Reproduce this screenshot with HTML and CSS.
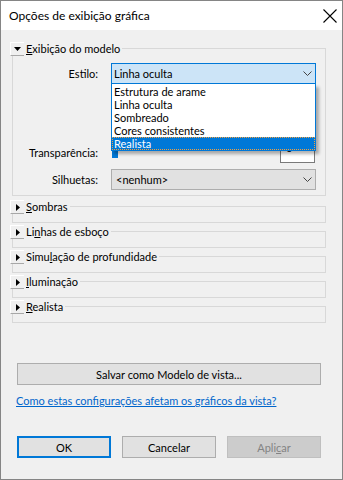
FILE: index.html
```html
<!DOCTYPE html>
<html lang="pt">
<head>
<meta charset="utf-8">
<title>Opções de exibição gráfica</title>
<link rel="stylesheet" href="styles.css">
</head>
<body>
<div class="window">
  <div class="titlebar">
    <span class="title">Opções de exibição gráfica</span>
    <svg class="close" width="14" height="14" viewBox="0 0 14 14"><path d="M0.5 0.5 L13.5 13.5 M13.5 0.5 L0.5 13.5" stroke="#000" stroke-width="1.1" fill="none"/></svg>
  </div>
  <div class="content">
    <div class="group open">
      <div class="group-head">
        <span class="toggle"><svg width="7" height="4" viewBox="0 0 7 4"><path d="M0 0 H7 L3.5 4 Z" fill="#000"/></svg></span>
        <span class="group-title"><u>E</u>xibição do modelo</span>
      </div>
      <div class="group-body">
        <div class="row row-estilo">
          <span class="label">Estilo:</span>
          <div class="combo-wrap">
            <div class="combo focused">
              <span>Linha oculta</span>
              <svg class="chev" width="9" height="5" viewBox="0 0 9 5"><path d="M0.5 0.5 L4.5 4.5 L8.5 0.5" stroke="#444" fill="none"/></svg>
            </div>
            <ul class="dropdown">
              <li>Estrutura de arame</li>
              <li>Linha oculta</li>
              <li>Sombreado</li>
              <li>Cores consistentes</li>
              <li class="selected">Realista</li>
            </ul>
          </div>
        </div>
        <div class="row row-transp">
          <span class="label">Transparência:</span>
          <div class="slider"><span class="thumb"></span></div>
          <div class="numbox">0</div>
        </div>
        <div class="row row-silh">
          <span class="label">Silhuetas:</span>
          <div class="combo">
            <span class="combo-text">&lt;nenhum&gt;</span>
            <svg class="chev" width="9" height="5" viewBox="0 0 9 5"><path d="M0.5 0.5 L4.5 4.5 L8.5 0.5" stroke="#444" fill="none"/></svg>
          </div>
        </div>
      </div>
    </div>

    <div class="group collapsed">
      <div class="group-head">
        <span class="toggle"><svg width="4" height="7" viewBox="0 0 4 7"><path d="M0 0 V7 L4 3.5 Z" fill="#000"/></svg></span>
        <span class="group-title"><u>S</u>ombras</span>
      </div>
    </div>
    <div class="group collapsed">
      <div class="group-head">
        <span class="toggle"><svg width="4" height="7" viewBox="0 0 4 7"><path d="M0 0 V7 L4 3.5 Z" fill="#000"/></svg></span>
        <span class="group-title">Li<u>n</u>has de esboço</span>
      </div>
    </div>
    <div class="group collapsed">
      <div class="group-head">
        <span class="toggle"><svg width="4" height="7" viewBox="0 0 4 7"><path d="M0 0 V7 L4 3.5 Z" fill="#000"/></svg></span>
        <span class="group-title">Simu<u>l</u>ação de profundidade</span>
      </div>
    </div>
    <div class="group collapsed">
      <div class="group-head">
        <span class="toggle"><svg width="4" height="7" viewBox="0 0 4 7"><path d="M0 0 V7 L4 3.5 Z" fill="#000"/></svg></span>
        <span class="group-title"><u>I</u>luminação</span>
      </div>
    </div>
    <div class="group collapsed">
      <div class="group-head">
        <span class="toggle"><svg width="4" height="7" viewBox="0 0 4 7"><path d="M0 0 V7 L4 3.5 Z" fill="#000"/></svg></span>
        <span class="group-title"><u>R</u>ealista</span>
      </div>
    </div>

    <div class="btn wide">Salvar como Modelo de vista...</div>
    <a class="help" href="#">Como estas configurações afetam os gráficos da vista?</a>

    <div class="actions">
      <div class="btn default">OK</div>
      <div class="btn">Cancelar</div>
      <div class="btn disabled">Apli<u>c</u>ar</div>
    </div>
  </div>
</div>
</body>
</html>
```
FILE: styles.css
```css
* { box-sizing: border-box; }
html, body { margin: 0; padding: 0; }
body {
  width: 343px;
  height: 480px;
  overflow: hidden;
  background: #f0f0f0;
  font-family: "Segoe UI", Lato, "Noto Sans", sans-serif;
  font-size: 11px;
  color: #000;
}
.window {
  width: 343px;
  height: 480px;
  border: 1px solid #858585;
  background: #f0f0f0;
  display: flex;
  flex-direction: column;
}
.titlebar {
  height: 29px;
  flex: none;
  background: #fff;
  display: flex;
  align-items: center;
  justify-content: space-between;
  padding: 0 5px 0 8px;
}
.title { font-size: 12px; }
.close { display: block; }

.content {
  padding: 18px 0 0 11px;
}

.group {
  width: 314px;
  border: 1px solid #d8d8d8;
}
.group-head {
  display: flex;
  align-items: center;
  height: 14px;
  width: max-content;
  margin: -7px 0 0 -3px;
  padding-right: 2px;
  background: #f0f0f0;
  position: relative;
}
.toggle {
  width: 14px;
  height: 14px;
  display: flex;
  align-items: center;
  justify-content: center;
  border-bottom: 1px solid #a8a8a8;
  border-top: 1px solid #fff;
  border-left: 1px solid #fff;
  margin-right: 2px;
}
.toggle svg { display: block; }
.group-title { line-height: 14px; }

.group-body {
  padding: 7px 8px 5px 0;
}
.row {
  display: flex;
  align-items: center;
}
.label {
  width: 85px;
  margin-right: 13px;
  text-align: right;
  flex: none;
}
.combo-wrap {
  position: relative;
  width: 205px;
}
.combo {
  width: 205px;
  height: 21px;
  border: 1px solid #adadad;
  background: #e1e1e1;
  display: flex;
  align-items: center;
  justify-content: space-between;
  padding: 0 3px 0 4px;
}
.combo.focused {
  border-color: #0078d7;
  background: #cce4f7;
  padding-left: 2px;
}
.chev { display: block; }

.dropdown {
  position: absolute;
  top: 100%;
  left: 0;
  width: 205px;
  margin: 0;
  padding: 1px 0 0 0;
  list-style: none;
  background: #fff;
  border: 1px solid #0078d7;
  border-top: none;
  box-shadow: 3px 3px 3px rgba(0, 0, 0, 0.3);
  z-index: 5;
}
.dropdown li {
  height: 13px;
  line-height: 13px;
  padding-left: 2px;
  white-space: nowrap;
}
.dropdown li.selected {
  background: #0078d7;
  color: #fff;
  outline: 1px dotted #f0a040;
  outline-offset: -1px;
}

.row-transp {
  margin-top: 57px;
  height: 22px;
}
.slider {
  flex: 1;
  height: 22px;
  position: relative;
}
.thumb {
  position: absolute;
  left: 1px;
  bottom: 5px;
  width: 6px;
  height: 14px;
  background: #0078d7;
}
.numbox {
  width: 35px;
  height: 22px;
  margin: 0 2px 0 8px;
  border: 1px solid #7a7a7a;
  background: #fff;
  padding: 0 0 0 5px;
  line-height: 11px;
}
.row-silh { margin-top: 6px; }

.group.collapsed {
  height: 17px;
  margin-top: 8px;
}
.group.open + .group.collapsed { margin-top: 10px; }

.btn {
  height: 22px;
  border: 1px solid #adadad;
  background: #e1e1e1;
  display: flex;
  align-items: center;
  justify-content: center;
}
.btn.wide {
  width: 304px;
  margin: 40px 0 0 5px;
}
.help {
  display: block;
  width: max-content;
  margin: 9px 0 0 4px;
  line-height: 14px;
  color: #0066cc;
  text-decoration: underline;
}
.actions {
  display: flex;
  gap: 11px;
  margin: 28px 0 0 5px;
}
.actions .btn { width: 94px; }
.btn.default { border: 2px solid #0078d7; }
.btn.disabled {
  background: #cccccc;
  border-color: #bfbfbf;
  color: #838383;
}
```
